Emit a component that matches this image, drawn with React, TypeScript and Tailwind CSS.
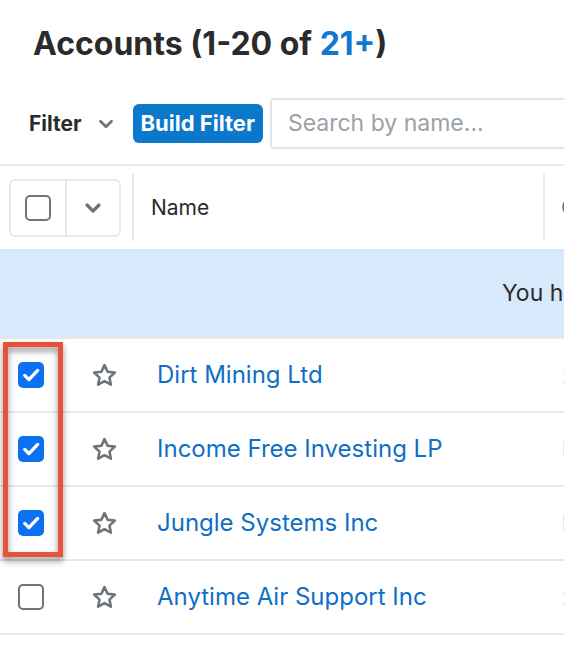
import { ChevronDown } from "lucide-react";

const rows = [
  { name: "Dirt Mining Ltd", checked: true, extra: "2" },
  { name: "Income Free Investing LP", checked: true, extra: "I" },
  { name: "Jungle Systems Inc", checked: true, extra: "I" },
  { name: "Anytime Air Support Inc", checked: false, extra: "2" },
];

const Checkbox = ({ checked }: { checked: boolean }) =>
  checked ? (
    <div className="w-[26px] h-[26px] rounded-[5px] bg-[#0a72f2] flex items-center justify-center shrink-0">
      <svg width="20" height="20" viewBox="0 0 24 24" fill="none">
        <path d="M4.5 12.5l5 5L20 6.5" stroke="white" strokeWidth="4" strokeLinecap="round" strokeLinejoin="round" />
      </svg>
    </div>
  ) : (
    <div className="w-[26px] h-[26px] rounded-[5px] border-2 border-[#6f7479] bg-white shrink-0" />
  );

const Star = () => (
  <svg width="27" height="27" viewBox="0 0 24 24" fill="none" className="shrink-0">
    <path
      d="M12 2.8l2.75 5.9 6.45.75-4.8 4.4 1.3 6.35L12 17l-5.7 3.2 1.3-6.35-4.8-4.4 6.45-.75z"
      stroke="#6f7479"
      strokeWidth="2.3"
      strokeLinejoin="round"
    />
  </svg>
);

export default function App() {
  return (
    <div className="relative w-[564px] h-[646px] overflow-hidden bg-white font-['Inter',sans-serif] text-[#2b2b2b]">
      <h1 className="pl-[33px] pt-[24px] text-[32px] font-bold leading-[40px] whitespace-nowrap">
        Accounts (1-20 of <span className="text-[#0f78cf]">21+</span>)
      </h1>

      <div className="flex items-center mt-[34px] pl-[29px] pb-[15px] border-b-2 border-[#e6e9ec] w-[700px]">
        <span className="text-[21px] font-bold">Filter</span>
        <ChevronDown className="ml-[13px] text-[#6f7479]" size={22} strokeWidth={3} />
        <button className="ml-[16px] h-[39px] px-[8px] rounded-[6px] bg-[#0c78cc] text-white text-[22px] font-bold">
          Build Filter
        </button>
        <div className="ml-[7px] h-[51px] w-[400px] rounded-[4px] border-2 border-[#e1e5e9] flex items-center pl-[16px] text-[23px] text-[#9ba1a7]">
          Search by name...
        </div>
      </div>

      <div className="flex items-center h-[83px] w-[700px]">
        <div className="ml-[9px] w-[112px] h-[58px] rounded-[6px] border-2 border-[#e6e9ec] flex items-center">
          <div className="w-[54px] flex justify-center">
            <Checkbox checked={false} />
          </div>
          <div className="w-[2px] self-stretch bg-[#e6e9ec]" />
          <div className="flex-1 flex justify-center">
            <ChevronDown className="text-[#6f7479]" size={24} strokeWidth={3.2} />
          </div>
        </div>
        <div className="ml-[11px] w-[2px] h-[67px] bg-[#e6e9ec]" />
        <span className="ml-[17px] w-[392px] text-[21px]">Name</span>
        <div className="w-[2px] h-[67px] bg-[#e6e9ec]" />
        <span className="ml-[16px] text-[22px] text-[#6f7479]">C</span>
      </div>

      <div className="h-[90px] bg-[#d7eafb] border-b-2 border-[#e6e9ec] flex items-center pl-[502px] w-[800px]">
        <span className="text-[23px] whitespace-nowrap">You have selected 3 records</span>
      </div>

      {rows.map((r) => (
        <div key={r.name} className="flex items-center h-[74px] border-b-2 border-[#e6e9ec] w-[700px]">
          <div className="ml-[18px]">
            <Checkbox checked={r.checked} />
          </div>
          <div className="ml-[47px]">
            <Star />
          </div>
          <span className="ml-[39px] w-[405px] text-[24px] text-[#0f6fc5] whitespace-nowrap">{r.name}</span>
          <span className="text-[22px] text-[#6f7479]">{r.extra}</span>
        </div>
      ))}

      <div className="absolute left-[3px] top-[342px] w-[60px] h-[215px] border-[5px] border-[#e5533a] drop-shadow-[0_4px_3px_rgba(0,0,0,0.45)]" />
    </div>
  );
}
